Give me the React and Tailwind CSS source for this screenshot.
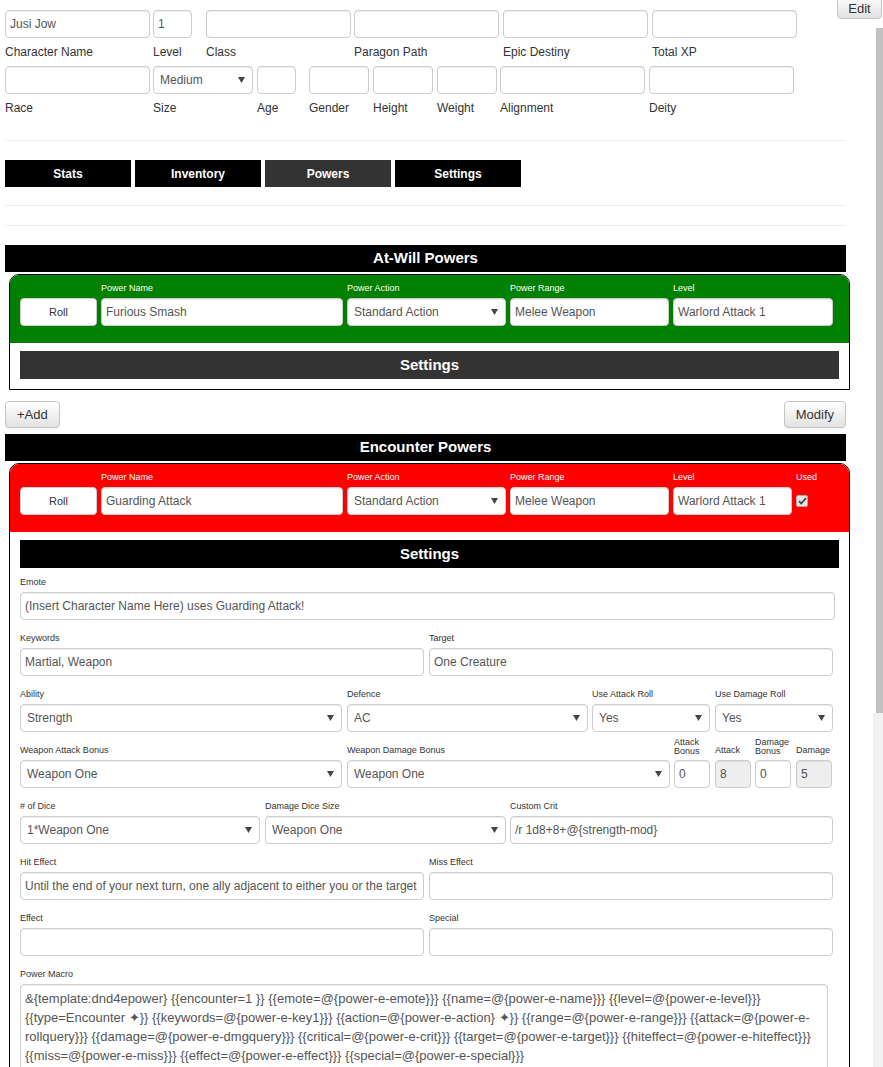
import React from "react";

const N = "font-['Liberation_Sans',Arial,sans-serif]";

const inputCls =
  "h-[28px] w-full rounded-[4px] border border-[#ccc] px-[4px] text-[12px] text-[#555] shadow-[inset_0_1px_1px_rgba(0,0,0,0.075)] outline-none " +
  N;

function Input({ value = "", disabled }) {
  return (
    <input
      type="text"
      defaultValue={value}
      disabled={disabled}
      className={`${inputCls} ${disabled ? "bg-[#eee]" : "bg-white"}`}
    />
  );
}

function Select({ value, options }) {
  return (
    <div className="relative w-full">
      <select defaultValue={value} className={`${inputCls} appearance-none bg-white pl-[6px] pr-[20px]`}>
        {(options || [value]).map((o) => (
          <option key={o}>{o}</option>
        ))}
      </select>
      <svg className="pointer-events-none absolute right-[8px] top-[11px]" width="7" height="6" viewBox="0 0 7 6">
        <path d="M0 0h7L3.5 6z" fill="#444" />
      </svg>
    </div>
  );
}

function TopField({ className, label, children }) {
  return (
    <div className={`flex flex-col ${className}`}>
      {children}
      <div className={`flex h-[28px] items-center whitespace-nowrap text-[12px] text-[#333] ${N}`}>{label}</div>
    </div>
  );
}

// label over a field inside the power cards
function F({ label, className = "", light, children }) {
  return (
    <div className={`flex flex-col ${className}`}>
      <div
        className={`mb-[4px] flex h-[12px] flex-col justify-end whitespace-pre text-[9px] ${
          light ? "text-white" : "text-[#333]"
        } ${N}`}
      >
        <span className={label && label.includes("\n") ? "leading-[9px]" : "leading-[12px]"}>{label}</span>
      </div>
      {children}
    </div>
  );
}

function RollBtn() {
  return (
    <div
      className={`flex h-[28px] w-[77px] items-center justify-center rounded-[4px] border border-[#ccc] bg-white text-[11px] text-[#333] ${N}`}
    >
      Roll
    </div>
  );
}

function Btn({ children }) {
  return (
    <div
      className={`flex h-[27px] items-center rounded-[4px] border border-[#c4c4c4] bg-gradient-to-b from-white to-[#e2e2e2] px-[11px] text-[13px] text-[#333] shadow-[0_1px_1px_rgba(0,0,0,0.05)] ${N}`}
    >
      {children}
    </div>
  );
}

function Header({ children }) {
  return (
    <div className={`flex h-[27px] w-[841px] items-center justify-center bg-black text-[15px] font-bold text-white ${N}`}>
      {children}
    </div>
  );
}

function SettingsBar({ dark }) {
  return (
    <div
      className={`flex h-[28px] items-center justify-center text-[15px] font-bold text-white ${N} ${
        dark ? "bg-[#333]" : "bg-black"
      }`}
    >
      Settings
    </div>
  );
}

function TopRow({ color, used, name }) {
  return (
    <div className={`flex px-[10px] pb-[17px] pt-[7px] ${color}`}>
      <F light>
        <RollBtn />
      </F>
      <F light label="Power Name" className="ml-[4px] w-[242px]">
        <Input value={name} />
      </F>
      <F light label="Power Action" className="ml-[4px] w-[159px]">
        <Select value="Standard Action" options={["Standard Action", "Move Action", "Minor Action", "Free Action"]} />
      </F>
      <F light label="Power Range" className="ml-[4px] w-[159px]">
        <Input value="Melee Weapon" />
      </F>
      <F light label="Level" className={`ml-[4px] ${used ? "w-[119px]" : "w-[160px]"}`}>
        <Input value="Warlord Attack 1" />
      </F>
      {used && (
        <F light label="Used" className="ml-[4px]">
          <div className="flex h-[28px] items-center">
            <span className="flex h-[12px] w-[12px] items-center justify-center rounded-[2px] border border-[#a9a9a9] bg-[#e4e4e4]">
              <svg width="9" height="8" viewBox="0 0 9 8">
                <path d="M1 4.2l2.2 2.3L8 1.2" fill="none" stroke="#444" strokeWidth="1.8" />
              </svg>
            </span>
          </div>
        </F>
      )}
    </div>
  );
}

const macro =
  "&{template:dnd4epower} {{encounter=1 }} {{emote=@{power-e-emote}}} {{name=@{power-e-name}}} {{level=@{power-e-level}}} {{type=Encounter \u2726}} {{keywords=@{power-e-key1}}} {{action=@{power-e-action} \u2726}} {{range=@{power-e-range}}} {{attack=@{power-e-rollquery}}} {{damage=@{power-e-dmgquery}}} {{critical=@{power-e-crit}}} {{target=@{power-e-target}}} {{hiteffect=@{power-e-hiteffect}}} {{miss=@{power-e-miss}}} {{effect=@{power-e-effect}}} {{special=@{power-e-special}}}";

export default function App() {
  return (
    <div className="relative flex h-[1067px] w-full overflow-hidden bg-white">
      <div className="flex-1 pl-[5px] pt-[10px]">
        {/* character header */}
        <div className="flex">
          <TopField className="w-[145px]" label="Character Name">
            <Input value="Jusi Jow" />
          </TopField>
          <TopField className="ml-[3px] w-[39px]" label="Level">
            <Input value="1" />
          </TopField>
          <TopField className="ml-[14px] w-[145px]" label="Class">
            <Input />
          </TopField>
          <TopField className="ml-[3px] w-[145px]" label="Paragon Path">
            <Input />
          </TopField>
          <TopField className="ml-[4px] w-[145px]" label="Epic Destiny">
            <Input />
          </TopField>
          <TopField className="ml-[4px] w-[145px]" label="Total XP">
            <Input />
          </TopField>
        </div>
        <div className="flex">
          <TopField className="w-[145px]" label="Race">
            <Input />
          </TopField>
          <TopField className="ml-[3px] w-[100px]" label="Size">
            <Select value="Medium" options={["Tiny", "Small", "Medium", "Large", "Huge"]} />
          </TopField>
          <TopField className="ml-[4px] w-[39px]" label="Age">
            <Input />
          </TopField>
          <TopField className="ml-[13px] w-[60px]" label="Gender">
            <Input />
          </TopField>
          <TopField className="ml-[4px] w-[60px]" label="Height">
            <Input />
          </TopField>
          <TopField className="ml-[4px] w-[60px]" label="Weight">
            <Input />
          </TopField>
          <TopField className="ml-[3px] w-[145px]" label="Alignment">
            <Input />
          </TopField>
          <TopField className="ml-[4px] w-[145px]" label="Deity">
            <Input />
          </TopField>
        </div>

        <div className="mt-[18px] h-px w-[841px] bg-[#eee]" />
        <div className="mt-[19px] flex gap-[4px]">
          {["Stats", "Inventory", "Powers", "Settings"].map((t) => (
            <div
              key={t}
              className={`flex h-[27px] w-[126px] items-center justify-center text-[12px] font-bold text-white ${N} ${
                t === "Powers" ? "bg-[#333]" : "bg-black"
              }`}
            >
              {t}
            </div>
          ))}
        </div>
        <div className="mt-[18px] h-px w-[841px] bg-[#eee]" />
        <div className="mt-[19px] h-px w-[841px] bg-[#eee]" />

        {/* at-will */}
        <div className="mt-[19px]">
          <Header>At-Will Powers</Header>
        </div>
        <div className="ml-[4px] mt-[2px] w-[841px] overflow-hidden rounded-t-[10px] border border-black">
          <TopRow color="bg-[#008000]" name="Furious Smash" />
          <div className="px-[10px] pb-[10px] pt-[8px]">
            <SettingsBar dark />
          </div>
        </div>

        <div className="mt-[11px] flex w-[841px] justify-between">
          <Btn>+Add</Btn>
          <Btn>Modify</Btn>
        </div>

        {/* encounter */}
        <div className="mt-[6px]">
          <Header>Encounter Powers</Header>
        </div>
        <div className="ml-[4px] mt-[2px] w-[841px] overflow-hidden rounded-t-[10px] border border-black">
          <TopRow color="bg-[#ff0000]" name="Guarding Attack" used />
          <div className="px-[10px] pb-[20px] pt-[8px]">
            <SettingsBar />
            <div className="mt-[8px] flex flex-col gap-[12px]">
              <div className="flex">
                <F label="Emote" className="w-[815px]">
                  <Input value="(Insert Character Name Here) uses Guarding Attack!" />
                </F>
              </div>
              <div className="flex">
                <F label="Keywords" className="w-[404px]">
                  <Input value="Martial, Weapon" />
                </F>
                <F label="Target" className="ml-[5px] w-[404px]">
                  <Input value="One Creature" />
                </F>
              </div>
              <div className="flex">
                <F label="Ability" className="w-[322px]">
                  <Select value="Strength" options={["Strength", "Constitution", "Dexterity", "Intelligence", "Wisdom", "Charisma"]} />
                </F>
                <F label="Defence" className="ml-[5px] w-[241px]">
                  <Select value="AC" options={["AC", "Fortitude", "Reflex", "Will"]} />
                </F>
                <F label="Use Attack Roll" className="ml-[4px] w-[118px]">
                  <Select value="Yes" options={["Yes", "No"]} />
                </F>
                <F label="Use Damage Roll" className="ml-[5px] w-[118px]">
                  <Select value="Yes" options={["Yes", "No"]} />
                </F>
              </div>
              <div className="flex">
                <F label="Weapon Attack Bonus" className="w-[322px]">
                  <Select value="Weapon One" options={["Weapon One", "Weapon Two"]} />
                </F>
                <F label="Weapon Damage Bonus" className="ml-[5px] w-[323px]">
                  <Select value="Weapon One" options={["Weapon One", "Weapon Two"]} />
                </F>
                <F label={"Attack\nBonus"} className="ml-[4px] w-[36px]">
                  <Input value="0" />
                </F>
                <F label="Attack" className="ml-[5px] w-[36px]">
                  <Input value="8" disabled />
                </F>
                <F label={"Damage\nBonus"} className="ml-[4px] w-[36px]">
                  <Input value="0" />
                </F>
                <F label="Damage" className="ml-[5px] w-[36px]">
                  <Input value="5" disabled />
                </F>
              </div>
              <div className="flex">
                <F label="# of Dice" className="w-[240px]">
                  <Select value="1*Weapon One" options={["1*Weapon One", "2*Weapon One"]} />
                </F>
                <F label="Damage Dice Size" className="ml-[5px] w-[241px]">
                  <Select value="Weapon One" options={["Weapon One", "Weapon Two"]} />
                </F>
                <F label="Custom Crit" className="ml-[4px] w-[323px]">
                  <Input value="/r 1d8+8+@{strength-mod}" />
                </F>
              </div>
              <div className="flex">
                <F label="Hit Effect" className="w-[404px]">
                  <Input value="Until the end of your next turn, one ally adjacent to either you or the target gains a power bonus to AC equal to your Intelligence modifier." />
                </F>
                <F label="Miss Effect" className="ml-[5px] w-[404px]">
                  <Input />
                </F>
              </div>
              <div className="flex">
                <F label="Effect" className="w-[404px]">
                  <Input />
                </F>
                <F label="Special" className="ml-[5px] w-[404px]">
                  <Input />
                </F>
              </div>
              <F label="Power Macro" className="w-[808px]">
                <textarea
                  defaultValue={macro}
                  className={`h-[110px] w-full resize-none rounded-[4px] border border-[#ccc] px-[4px] py-[4px] text-[13px] leading-[19px] text-[#555] shadow-[inset_0_1px_1px_rgba(0,0,0,0.075)] outline-none ${N}`}
                />
              </F>
            </div>
          </div>
        </div>
      </div>

      {/* scrollbar */}
      <div className="flex w-[10px] flex-col pt-[28px]">
        <div className="flex h-[685px]">
          <div className="w-[3px]" />
          <div className="flex-1 bg-[#c1c1c1]" />
        </div>
        <div className="flex-1 bg-[#f1f1f1]" />
      </div>

      <div
        className={`absolute right-[1px] top-[-6px] flex h-[25px] w-[45px] items-center justify-center rounded-[4px] border border-[#c4c4c4] bg-gradient-to-b from-white to-[#e2e2e2] pt-[4px] text-[13px] text-[#333] ${N}`}
      >
        Edit
      </div>
    </div>
  );
}
